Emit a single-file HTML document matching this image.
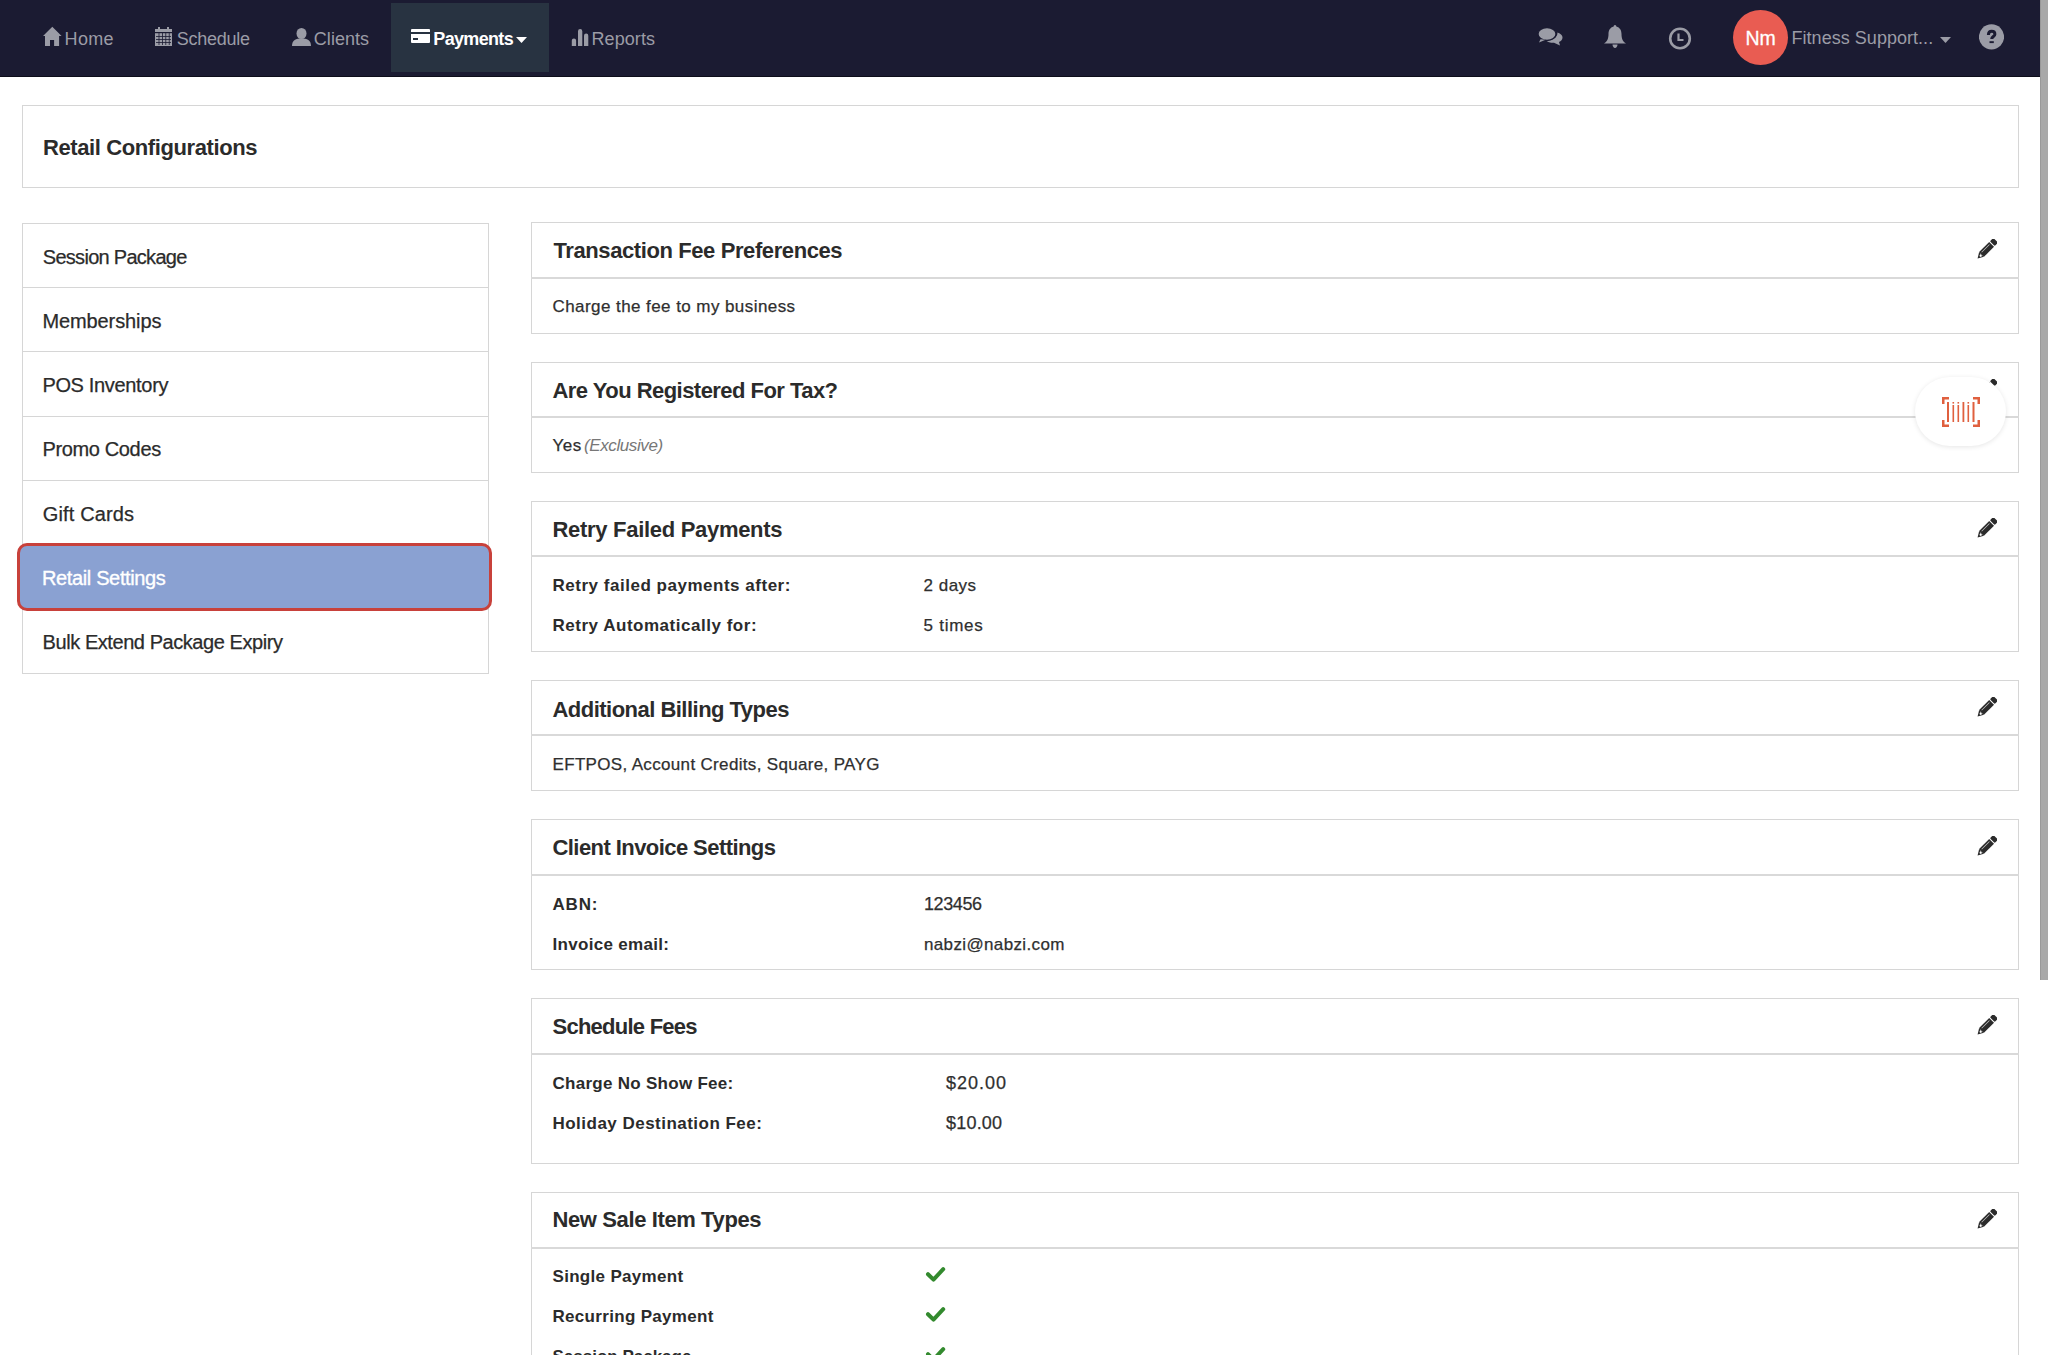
<!DOCTYPE html>
<html><head><meta charset="utf-8">
<style>
*{box-sizing:border-box;margin:0;padding:0}
html,body{width:2048px;height:1355px;overflow:hidden;background:#fff;font-family:"Liberation Sans",sans-serif;color:#2f2f2f}
#nav{position:absolute;left:0;top:0;width:2040px;height:77px;background:#1b1b32;border-bottom:1px solid #0d0d1a}
.act{position:absolute;left:391px;top:3px;width:158px;height:69px;background:#283341}
#sb{position:absolute;left:2040px;top:0;width:8px;height:1355px;background:#fff}
#thumb{position:absolute;left:2040px;top:0;width:8px;height:980px;background:#a9a9a9;border-left:1px solid #9a9a9a}
.box{position:absolute;border:1px solid #d6d6d6;background:#fff}
.t{position:absolute;white-space:nowrap}
.h,.hh{font-weight:bold;font-size:22px;line-height:22px;color:#2b2b2b}
.b{font-size:17px;line-height:17px;color:#2f2f2f;-webkit-text-stroke:0.25px #2f2f2f}
.bn{font-size:18px;line-height:18px;color:#2f2f2f;-webkit-text-stroke:0.25px #2f2f2f}
.bi{font-size:17px;line-height:17px;font-style:italic;color:#777}
.lb{font-weight:bold;font-size:17px;line-height:17px;color:#2b2b2b}
.side{font-size:20px;line-height:20px;color:#2b2b2b;-webkit-text-stroke:0.25px #2b2b2b}
.nav{font-size:18px;line-height:18px}
.navb{font-size:18px;line-height:18px;font-weight:bold}
.line{position:absolute;height:1px;background:#d6d6d6}
.pen{position:absolute}
</style></head><body>
<div id="nav">
  <div class="act"></div>
  <svg style="position:absolute;left:42px;top:26px" width="21" height="21" viewBox="0 0 21 21"><path d="M10.3 0.8 L19.6 10 L17.1 10 L17.1 20 L12.1 20 L12.1 14 L8 14 L8 20 L3 20 L3 10 L1 10 Z" fill="#9b9ca6"/></svg>
  <svg style="position:absolute;left:155px;top:27px" width="17" height="19" viewBox="0 0 17 19"><rect x="0" y="2" width="17" height="17" fill="#9b9ca6"/><rect x="3" y="0" width="2" height="3" fill="#9b9ca6"/><rect x="12" y="0" width="2" height="3" fill="#9b9ca6"/><g fill="#1b1b32"><rect x="0" y="5" width="17" height="1.2"/><rect x="3.6" y="6" width="0.8" height="12"/><rect x="7" y="6" width="0.8" height="12"/><rect x="10.4" y="6" width="0.8" height="12"/><rect x="13.8" y="6" width="0.8" height="12"/><rect x="1" y="9" width="15" height="0.8"/><rect x="1" y="12" width="15" height="0.8"/><rect x="1" y="15" width="15" height="0.8"/></g></svg>
  <svg style="position:absolute;left:292px;top:28px" width="19" height="18" viewBox="0 0 19 18"><ellipse cx="9.5" cy="5.5" rx="5" ry="5.5" fill="#9b9ca6"/><path d="M0 18 C0 12 4 10.5 9.5 10.5 C15 10.5 19 12 19 18 Z" fill="#9b9ca6"/></svg>
  <svg style="position:absolute;left:411px;top:29px" width="19" height="14" viewBox="0 0 19 14"><rect x="0" y="0" width="19" height="14" rx="1" fill="#fff"/><rect x="0" y="3" width="19" height="2" fill="#283341"/><rect x="2" y="9" width="5" height="2" fill="#283341"/></svg>
  <svg style="position:absolute;left:516px;top:37px" width="11" height="6" viewBox="0 0 11 6"><path d="M0 0 L11 0 L5.5 6 Z" fill="#fff"/></svg>
  <svg style="position:absolute;left:571px;top:29px" width="18" height="17" viewBox="0 0 18 17"><path d="M0.8 17 V11.55 A2.15 2.15 0 0 1 5.10 11.55 V17 Z M7 17 V2.15 A2.15 2.15 0 0 1 11.30 2.15 V17 Z M13 17 V6.65 A2.15 2.15 0 0 1 17.30 6.65 V17 Z " fill="#9b9ca6"/></svg>
  <svg style="position:absolute;left:1537px;top:26px" width="27" height="21" viewBox="0 0 27 21"><path d="M20.5 6.5 C24 7.5 25.5 9.5 25.5 11.5 C25.5 13.5 24 15 22 16 L23 19.5 L17 16.8 C13 16.8 10.5 16 9 14.5 C15 14.5 20.5 12 20.5 6.5Z" fill="#9b9ca6"/><ellipse cx="10" cy="8" rx="9" ry="6.5" fill="#9b9ca6" stroke="#1b1b32" stroke-width="1.3"/><path d="M3.5 13.3 L2 16.5 L8.5 13.8Z" fill="#9b9ca6"/></svg>
  <svg style="position:absolute;left:1604px;top:25px" width="22" height="23" viewBox="0 0 22 23"><path d="M11 0 C12 0 12.3 1 12.3 1.5 C16 2.5 17.5 5.5 17.5 9 C17.5 14 19 16.5 22 18.5 L0 18.5 C3 16.5 4.5 14 4.5 9 C4.5 5.5 6 2.5 9.7 1.5 C9.7 1 10 0 11 0Z" fill="#9b9ca6"/><path d="M8.5 19.5 L13.5 19.5 C13.5 21 12.5 23 11 23 C9.5 23 8.5 21 8.5 19.5Z" fill="#9b9ca6"/></svg>
  <svg style="position:absolute;left:1668px;top:27px" width="24" height="24" viewBox="0 0 24 24"><circle cx="12" cy="11.5" r="9.8" fill="none" stroke="#9b9ca6" stroke-width="2.6"/><path d="M10.5 6.5 L10.5 13 L15.5 13" fill="none" stroke="#9b9ca6" stroke-width="2.2"/></svg>
  <div style="position:absolute;left:1733px;top:10px;width:55px;height:55px;border-radius:50%;background:#e95c52"></div>
  <svg style="position:absolute;left:1940px;top:37px" width="11" height="6" viewBox="0 0 11 6"><path d="M0 0 L11 0 L5.5 6 Z" fill="#9b9ca6"/></svg>
  <svg style="position:absolute;left:1979px;top:24px" width="25" height="26" viewBox="0 0 25 26"><circle cx="12.5" cy="12.9" r="12.6" fill="#9b9ca6"/><path d="M9.4 11 C9.4 8.5 11 7.3 12.7 7.3 C14.5 7.3 15.9 8.4 15.9 10.2 C15.9 12.5 12.7 12.6 12.7 15.1" fill="none" stroke="#1b1b32" stroke-width="3"/><rect x="10.5" y="17.2" width="4.3" height="1.9" fill="#1b1b32"/></svg>
</div>
<div id="sb"></div><div id="thumb"></div>
<div class="box" style="left:22px;top:105px;width:1997px;height:83px"></div>
<div class="box" style="left:22px;top:223px;width:467px;height:451px"></div>
<div class="line" style="left:22px;top:287px;width:467px"></div>
<div class="line" style="left:22px;top:351px;width:467px"></div>
<div class="line" style="left:22px;top:416px;width:467px"></div>
<div class="line" style="left:22px;top:480px;width:467px"></div>
<div class="line" style="left:22px;top:545px;width:467px"></div>
<div class="line" style="left:22px;top:609px;width:467px"></div>
<div style="position:absolute;left:17px;top:543px;width:475px;height:68px;border:3.6px solid #c8413b;border-radius:10px;background:#8aa1d2"></div>
<div class="box" style="left:531px;top:222px;width:1488px;height:112px"></div>
<div class="line" style="left:531px;top:277px;width:1488px;height:2px;background:#d9d9d9"></div>
<svg class="pen" style="left:1975.5px;top:239px" width="21" height="21" viewBox="0 0 21 21"><g transform="translate(10.5,10.5) rotate(-45) translate(-12.6,-3.4)"><path d="M0 3.4 L5.6 0 L5.6 6.8 Z" fill="#2b2b2b"/><rect x="5.6" y="0" width="14.2" height="6.8" fill="#2b2b2b"/><rect x="20.8" y="0" width="4.8" height="6.8" rx="1.1" fill="#2b2b2b"/><rect x="7.2" y="1.6" width="11" height="0.7" fill="#c8c8c8"/><path d="M3.0 3.0 L5.0 2.2 L5.0 5.0 L3.0 4.4Z" fill="#fff"/></g></svg>
<div class="box" style="left:531px;top:362px;width:1488px;height:111px"></div>
<div class="line" style="left:531px;top:416px;width:1488px;height:2px;background:#d9d9d9"></div>
<svg class="pen" style="left:1975.5px;top:379px" width="21" height="21" viewBox="0 0 21 21"><g transform="translate(10.5,10.5) rotate(-45) translate(-12.6,-3.4)"><path d="M0 3.4 L5.6 0 L5.6 6.8 Z" fill="#2b2b2b"/><rect x="5.6" y="0" width="14.2" height="6.8" fill="#2b2b2b"/><rect x="20.8" y="0" width="4.8" height="6.8" rx="1.1" fill="#2b2b2b"/><rect x="7.2" y="1.6" width="11" height="0.7" fill="#c8c8c8"/><path d="M3.0 3.0 L5.0 2.2 L5.0 5.0 L3.0 4.4Z" fill="#fff"/></g></svg>
<div class="box" style="left:531px;top:501px;width:1488px;height:151px"></div>
<div class="line" style="left:531px;top:555px;width:1488px;height:2px;background:#d9d9d9"></div>
<svg class="pen" style="left:1975.5px;top:518px" width="21" height="21" viewBox="0 0 21 21"><g transform="translate(10.5,10.5) rotate(-45) translate(-12.6,-3.4)"><path d="M0 3.4 L5.6 0 L5.6 6.8 Z" fill="#2b2b2b"/><rect x="5.6" y="0" width="14.2" height="6.8" fill="#2b2b2b"/><rect x="20.8" y="0" width="4.8" height="6.8" rx="1.1" fill="#2b2b2b"/><rect x="7.2" y="1.6" width="11" height="0.7" fill="#c8c8c8"/><path d="M3.0 3.0 L5.0 2.2 L5.0 5.0 L3.0 4.4Z" fill="#fff"/></g></svg>
<div class="box" style="left:531px;top:680px;width:1488px;height:111px"></div>
<div class="line" style="left:531px;top:734px;width:1488px;height:2px;background:#d9d9d9"></div>
<svg class="pen" style="left:1975.5px;top:697px" width="21" height="21" viewBox="0 0 21 21"><g transform="translate(10.5,10.5) rotate(-45) translate(-12.6,-3.4)"><path d="M0 3.4 L5.6 0 L5.6 6.8 Z" fill="#2b2b2b"/><rect x="5.6" y="0" width="14.2" height="6.8" fill="#2b2b2b"/><rect x="20.8" y="0" width="4.8" height="6.8" rx="1.1" fill="#2b2b2b"/><rect x="7.2" y="1.6" width="11" height="0.7" fill="#c8c8c8"/><path d="M3.0 3.0 L5.0 2.2 L5.0 5.0 L3.0 4.4Z" fill="#fff"/></g></svg>
<div class="box" style="left:531px;top:819px;width:1488px;height:151px"></div>
<div class="line" style="left:531px;top:874px;width:1488px;height:2px;background:#d9d9d9"></div>
<svg class="pen" style="left:1975.5px;top:836px" width="21" height="21" viewBox="0 0 21 21"><g transform="translate(10.5,10.5) rotate(-45) translate(-12.6,-3.4)"><path d="M0 3.4 L5.6 0 L5.6 6.8 Z" fill="#2b2b2b"/><rect x="5.6" y="0" width="14.2" height="6.8" fill="#2b2b2b"/><rect x="20.8" y="0" width="4.8" height="6.8" rx="1.1" fill="#2b2b2b"/><rect x="7.2" y="1.6" width="11" height="0.7" fill="#c8c8c8"/><path d="M3.0 3.0 L5.0 2.2 L5.0 5.0 L3.0 4.4Z" fill="#fff"/></g></svg>
<div class="box" style="left:531px;top:998px;width:1488px;height:166px"></div>
<div class="line" style="left:531px;top:1053px;width:1488px;height:2px;background:#d9d9d9"></div>
<svg class="pen" style="left:1975.5px;top:1015px" width="21" height="21" viewBox="0 0 21 21"><g transform="translate(10.5,10.5) rotate(-45) translate(-12.6,-3.4)"><path d="M0 3.4 L5.6 0 L5.6 6.8 Z" fill="#2b2b2b"/><rect x="5.6" y="0" width="14.2" height="6.8" fill="#2b2b2b"/><rect x="20.8" y="0" width="4.8" height="6.8" rx="1.1" fill="#2b2b2b"/><rect x="7.2" y="1.6" width="11" height="0.7" fill="#c8c8c8"/><path d="M3.0 3.0 L5.0 2.2 L5.0 5.0 L3.0 4.4Z" fill="#fff"/></g></svg>
<div class="box" style="left:531px;top:1192px;width:1488px;height:209px"></div>
<div class="line" style="left:531px;top:1247px;width:1488px;height:2px;background:#d9d9d9"></div>
<svg class="pen" style="left:1975.5px;top:1209px" width="21" height="21" viewBox="0 0 21 21"><g transform="translate(10.5,10.5) rotate(-45) translate(-12.6,-3.4)"><path d="M0 3.4 L5.6 0 L5.6 6.8 Z" fill="#2b2b2b"/><rect x="5.6" y="0" width="14.2" height="6.8" fill="#2b2b2b"/><rect x="20.8" y="0" width="4.8" height="6.8" rx="1.1" fill="#2b2b2b"/><rect x="7.2" y="1.6" width="11" height="0.7" fill="#c8c8c8"/><path d="M3.0 3.0 L5.0 2.2 L5.0 5.0 L3.0 4.4Z" fill="#fff"/></g></svg>
<div style="position:absolute;left:1915px;top:377px;width:91px;height:69px;border-radius:34.5px;background:#fff;box-shadow:0 1px 5px rgba(0,0,0,0.10)"></div>
<svg style="position:absolute;left:1942px;top:397px" width="38" height="30" viewBox="0 0 38 30"><g fill="#e0603f"><path d="M0 0 H7 V2.5 H2.5 V7 H0Z"/><path d="M38 0 H31 V2.5 H35.5 V7 H38Z"/><path d="M0 30 H7 V27.5 H2.5 V23 H0Z"/><path d="M38 30 H31 V27.5 H35.5 V23 H38Z"/><rect x="5" y="5" width="2" height="20"/><rect x="10.5" y="8" width="1.6" height="17"/><rect x="10.5" y="5" width="1.6" height="1.6"/><rect x="15.5" y="8" width="1.6" height="17"/><rect x="15.5" y="5" width="1.6" height="1.6"/><rect x="20.5" y="5" width="1.8" height="20"/><rect x="25.5" y="8" width="1.6" height="17"/><rect x="25.5" y="5" width="1.6" height="1.6"/><rect x="30.5" y="5" width="2" height="20"/></g></svg>
<svg style="position:absolute;left:925px;top:1266px" width="21" height="17" viewBox="0 0 21 17"><polyline points="3,8.2 8.5,13.6 18.2,3.2" fill="none" stroke="#338a2e" stroke-width="4" stroke-linecap="round" stroke-linejoin="round"/></svg><svg style="position:absolute;left:925px;top:1306px" width="21" height="17" viewBox="0 0 21 17"><polyline points="3,8.2 8.5,13.6 18.2,3.2" fill="none" stroke="#338a2e" stroke-width="4" stroke-linecap="round" stroke-linejoin="round"/></svg><svg style="position:absolute;left:925px;top:1346px" width="21" height="17" viewBox="0 0 21 17"><polyline points="3,8.2 8.5,13.6 18.2,3.2" fill="none" stroke="#338a2e" stroke-width="4" stroke-linecap="round" stroke-linejoin="round"/></svg>
<div class="t h" style="left:553.5px;top:240px;letter-spacing:-0.404px">Transaction Fee Preferences</div>
<div class="t b" style="left:552.5px;top:298px;letter-spacing:0.429px">Charge the fee to my business</div>
<div class="t h" style="left:552.5px;top:380px;letter-spacing:-0.538px">Are You Registered For Tax?</div>
<div class="t b" style="left:552.5px;top:437px;letter-spacing:0.5px">Yes</div>
<div class="t bi" style="left:584px;top:437px;letter-spacing:-0.4px">(Exclusive)</div>
<div class="t h" style="left:552.5px;top:519px;letter-spacing:-0.3px">Retry Failed Payments</div>
<div class="t lb" style="left:552.5px;top:576.5px;letter-spacing:0.519px">Retry failed payments after:</div>
<div class="t b" style="left:923.5px;top:576.5px;letter-spacing:0.5px">2 days</div>
<div class="t lb" style="left:552.5px;top:617px;letter-spacing:0.522px">Retry Automatically for:</div>
<div class="t b" style="left:923.5px;top:617px;letter-spacing:0.75px">5 times</div>
<div class="t h" style="left:552.5px;top:698.5px;letter-spacing:-0.522px">Additional Billing Types</div>
<div class="t b" style="left:552.5px;top:756px;letter-spacing:0.333px">EFTPOS, Account Credits, Square, PAYG</div>
<div class="t h" style="left:552.5px;top:837px;letter-spacing:-0.568px">Client Invoice Settings</div>
<div class="t lb" style="left:552.5px;top:895.5px;letter-spacing:0.833px">ABN:</div>
<div class="t bn" style="left:924px;top:894.5px;letter-spacing:-0.4px">123456</div>
<div class="t lb" style="left:552.5px;top:935.5px;letter-spacing:0.308px">Invoice email:</div>
<div class="t b" style="left:924px;top:935.5px;letter-spacing:0.357px">nabzi@nabzi.com</div>
<div class="t h" style="left:552.5px;top:1016px;letter-spacing:-0.75px">Schedule Fees</div>
<div class="t lb" style="left:552.5px;top:1075px;letter-spacing:0.278px">Charge No Show Fee:</div>
<div class="t bn" style="left:946px;top:1073.5px;letter-spacing:1.0px">$20.00</div>
<div class="t lb" style="left:552.5px;top:1115px;letter-spacing:0.478px">Holiday Destination Fee:</div>
<div class="t bn" style="left:946px;top:1113.5px;letter-spacing:0.2px">$10.00</div>
<div class="t h" style="left:552.5px;top:1209px;letter-spacing:-0.389px">New Sale Item Types</div>
<div class="t lb" style="left:552.5px;top:1268px;letter-spacing:0.308px">Single Payment</div>
<div class="t lb" style="left:552.5px;top:1308px;letter-spacing:0.312px">Recurring Payment</div>
<div class="t lb" style="left:552.5px;top:1348px">Session Package</div>
<div class="t hh" style="left:43px;top:137px;letter-spacing:-0.4px;color:#2b2b2b">Retail Configurations</div>
<div class="t nav" style="left:64.6px;top:30px;letter-spacing:0.3px;color:#9b9ca6">Home</div>
<div class="t nav" style="left:176.7px;top:30px;letter-spacing:-0.243px;color:#9b9ca6">Schedule</div>
<div class="t nav" style="left:313.8px;top:30px;letter-spacing:0.05px;color:#9b9ca6">Clients</div>
<div class="t navb" style="left:433.3px;top:30px;letter-spacing:-0.671px;color:#fff">Payments</div>
<div class="t nav" style="left:591.5px;top:30px;letter-spacing:0.083px;color:#9b9ca6">Reports</div>
<div class="t nav" style="left:1745.5px;top:29px;color:#fff;font-size:19.5px;-webkit-text-stroke:0.3px #fff">Nm</div>
<div class="t nav" style="left:1791.5px;top:29px;letter-spacing:0.035px;color:#9b9ca6">Fitness Support...</div>
<div class="t side" style="left:42.8px;top:247px;letter-spacing:-0.714px">Session Package</div>
<div class="t side" style="left:42.4px;top:310.5px;letter-spacing:-0.1px">Memberships</div>
<div class="t side" style="left:42.4px;top:375px;letter-spacing:-0.333px">POS Inventory</div>
<div class="t side" style="left:42.4px;top:439px;letter-spacing:-0.35px">Promo Codes</div>
<div class="t side" style="left:42.8px;top:503.5px;letter-spacing:0.133px">Gift Cards</div>
<div class="t side" style="left:42px;top:568px;letter-spacing:-0.364px;color:#fff;-webkit-text-stroke:0.35px #fff">Retail Settings</div>
<div class="t side" style="left:42.6px;top:631.5px;letter-spacing:-0.436px">Bulk Extend Package Expiry</div>
</body></html>
